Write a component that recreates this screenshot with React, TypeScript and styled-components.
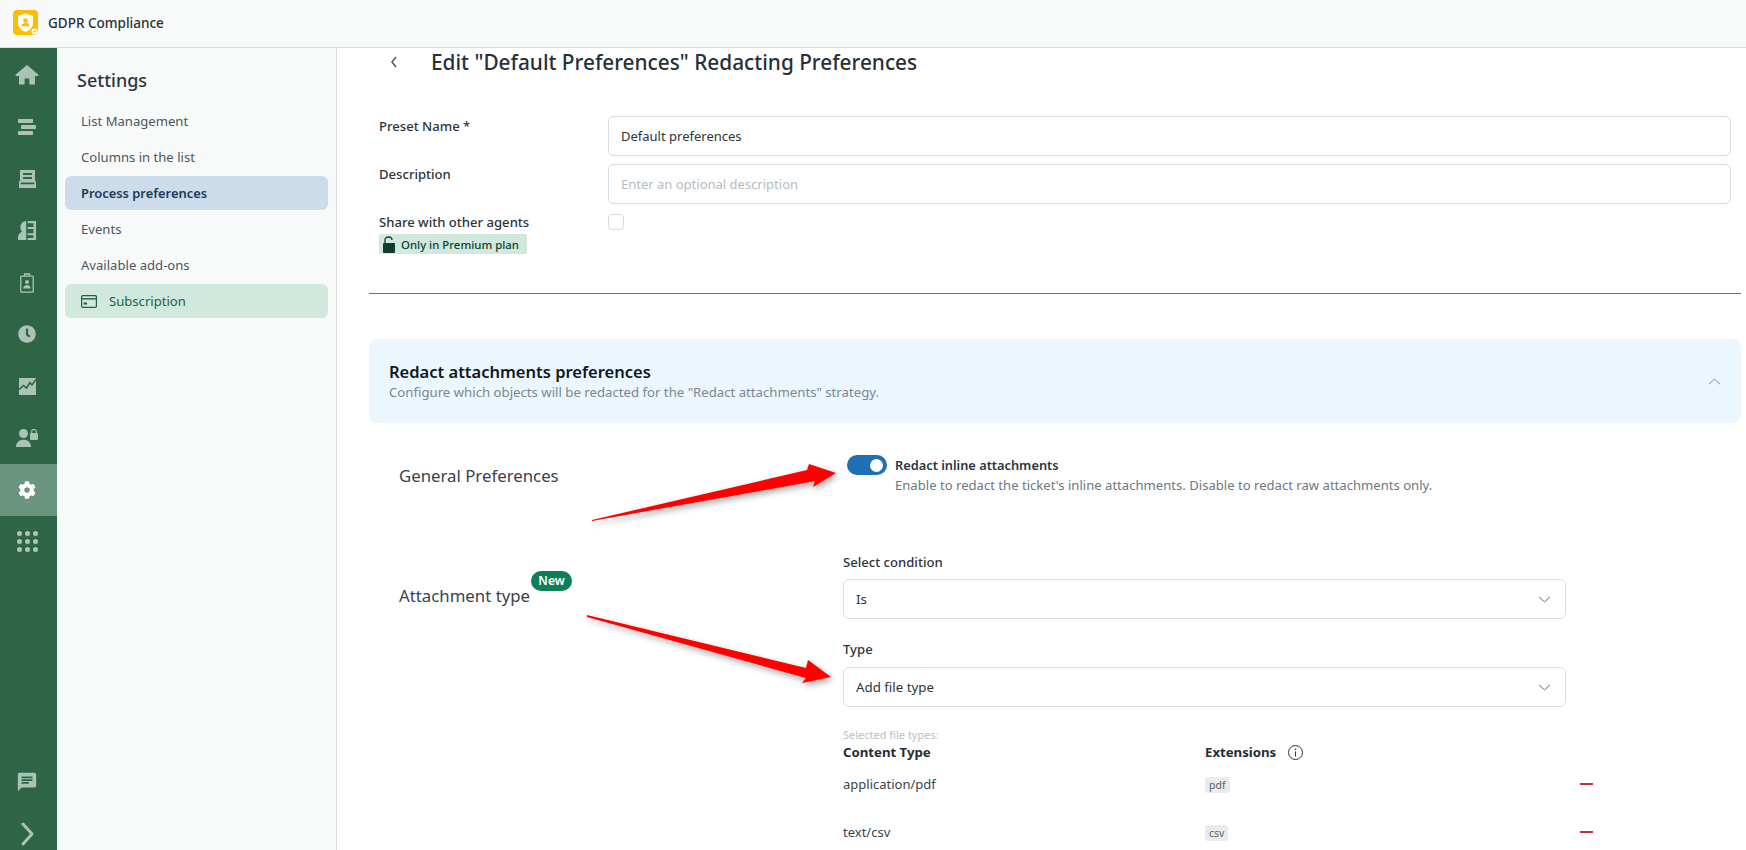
import React from "react";
import styled, { createGlobalStyle } from "styled-components";
import { FaCog, FaClock } from "react-icons/fa";
import { MdChat } from "react-icons/md";

const Global = createGlobalStyle`
  html, body { margin: 0; padding: 0; background: #fff; }
  body { font-family: "Noto Sans", "Open Sans", sans-serif; color: #2c343c; }
  * { box-sizing: border-box; }
`;

const Page = styled.div`
  position: relative;
  width: 100%;
  height: 850px;
  overflow: hidden;
  display: flex;
  flex-direction: column;
`;

const TopBar = styled.header`
  height: 48px;
  flex: none;
  display: flex;
  align-items: center;
  gap: 10px;
  padding: 0 0 2px 13px;
  background: #f8faf9;
  border-bottom: 1px solid #dcdfe1;
`;
const AppTitle = styled.div`
  font-size: 13.5px;
  font-weight: 500;
  color: #263238;
`;
const Body = styled.div`
  flex: 1;
  min-height: 0;
  display: flex;
`;
const Rail = styled.nav`
  width: 57px;
  flex: none;
  background: #2e6546;
  display: flex;
  flex-direction: column;
  padding-top: 1.5px;
`;
const RailItem = styled.div<{ $active?: boolean }>`
  height: 51.8px;
  flex: none;
  display: flex;
  align-items: center;
  justify-content: center;
  padding-right: 3px;
  color: ${(p) => (p.$active ? "#ffffff" : "#abc3b7")};
  background: ${(p) => (p.$active ? "#6b957f" : "transparent")};
`;
const RailBottom = styled.div`
  margin-top: auto;
  margin-bottom: -10px;
  display: flex;
  flex-direction: column;
`;
const SubNav = styled.aside`
  width: 280px;
  flex: none;
  background: #f8faf9;
  border-right: 1px solid #dcdfe1;
  padding: 20px 8px 0 8px;
`;
const SubTitle = styled.h2`
  margin: 0 0 11px 12px;
  font-size: 18px;
  line-height: 25px;
  font-weight: 500;
  color: #2c343f;
`;
const SubItem = styled.div<{ $kind?: "active" | "green" }>`
  height: 34px;
  margin-bottom: 2px;
  border-radius: 6px;
  display: flex;
  align-items: center;
  gap: 12px;
  padding-left: 16px;
  font-size: ${(p) => (p.$kind === "active" ? "12.9px" : "13.1px")};
  font-weight: ${(p) => (p.$kind === "active" ? 600 : 400)};
  color: ${(p) => (p.$kind === "active" ? "#1d3a57" : p.$kind === "green" ? "#1f5f49" : "#4c5660")};
  background: ${(p) => (p.$kind === "active" ? "#ccdceb" : p.$kind === "green" ? "#d1e8dd" : "transparent")};
`;
const Main = styled.main`
  flex: 1;
  min-width: 0;
  padding: 0 5px 0 32px;
  background: #fff;
`;
const Header = styled.div`
  height: 28px;
  display: flex;
  align-items: center;
  padding-left: 20px;
  margin-bottom: 40px;
`;
const BackIcon = styled.svg`
  width: 10px;
  height: 14px;
  margin-right: 32px;
  flex: none;
`;
const PageTitle = styled.h1`
  margin: 0;
  font-size: 20.8px;
  line-height: 28px;
  font-weight: 500;
  color: #27303a;
`;
const FormRow = styled.div<{ $gap: number }>`
  display: grid;
  grid-template-columns: 229px 1fr;
  padding: 0 10px;
  margin-bottom: ${(p) => p.$gap}px;
`;
const FieldLabel = styled.div`
  font-size: 13.1px;
  line-height: 20px;
  font-weight: 500;
  color: #2c343c;
`;
const ShareCell = styled.div`
  margin-top: -2px;
`;
const TextInput = styled.input`
  display: block;
  width: 100%;
  height: 40px;
  padding: 0 12px;
  border: 1px solid #dadde0;
  border-radius: 6px;
  font: 400 13px "Noto Sans", sans-serif;
  color: #2c343c;
  outline: none;
  &::placeholder { color: #b4bbc2; opacity: 1; }
`;
const Check = styled.div`
  width: 16px;
  height: 16px;
  border: 1px solid #d5d9dc;
  border-radius: 4px;
  background: #fff;
`;
const Premium = styled.div`
  display: flex;
  align-items: center;
  gap: 5px;
  width: 148px;
  height: 20px;
  margin-top: 2px;
  padding-left: 3px;
  border-radius: 2px;
  background: #d1e8dd;
  font-size: 11.4px;
  font-weight: 500;
  color: #0f3e2e;
`;
const Divider = styled.hr`
  margin: 39px 0 45px;
  border: 0;
  border-top: 1px solid #5f7488;
`;
const Panel = styled.section`
  height: 84px;
  border-radius: 8px;
  background: #ebf6ff;
  display: flex;
  align-items: center;
  justify-content: space-between;
  padding: 0 20px 0 20px;
`;
const PanelTitle = styled.div`
  font-size: 16.5px;
  line-height: 22px;
  font-weight: 600;
  color: #10171d;
`;
const PanelSub = styled.div`
  font-size: 13.2px;
  line-height: 18px;
  color: #7d8791;
`;
const PrefGrid = styled.div`
  display: grid;
  grid-template-columns: 444px 1fr;
  padding-left: 30px;
`;
const SectionHead = styled.div<{ $top: number }>`
  position: relative;
  width: max-content;
  height: 24px;
  margin-top: ${(p) => p.$top}px;
  font-size: 16.8px;
  line-height: 24px;
  color: #3a434c;
`;
const NewBadge = styled.span`
  position: absolute;
  left: 132px;
  top: -13px;
  width: 41px;
  height: 20px;
  border-radius: 10px;
  background: #0e7f5a;
  color: #fff;
  font-size: 12px;
  font-weight: 600;
  line-height: 20px;
  text-align: center;
`;
const ToggleRow = styled.div`
  display: flex;
  gap: 8px;
  padding: 0 0 0 4px;
  margin-top: 32px;
`;
const Toggle = styled.div`
  width: 40px;
  height: 20px;
  flex: none;
  border-radius: 10px;
  background: #1f6fb5;
  display: flex;
  align-items: center;
  justify-content: flex-end;
  padding-right: 4px;
  &::after {
    content: "";
    width: 13px;
    height: 13px;
    border-radius: 50%;
    background: #fff;
  }
`;
const ToggleTitle = styled.div`
  font-size: 12.8px;
  line-height: 20px;
  font-weight: 600;
  color: #2c343c;
`;
const ToggleSub = styled.div`
  font-size: 13.1px;
  line-height: 20px;
  color: #6d7882;
`;
const Fields = styled.div`
  margin-top: 57px;
  width: 723px;
`;
const Select = styled.div<{ $top: number }>`
  height: 40px;
  margin: ${(p) => p.$top}px 0 20px;
  border: 1px solid #dadde0;
  border-radius: 6px;
  display: flex;
  align-items: center;
  justify-content: space-between;
  padding: 0 14px 0 12px;
  font-size: 13.3px;
  color: #2c343c;
`;
const Hint = styled.div`
  margin-top: 21px;
  font-size: 11px;
  line-height: 14px;
  color: #b9bfc5;
`;
const TableRow = styled.div<{ $head?: boolean }>`
  display: grid;
  grid-template-columns: 362px 375px 20px;
  width: 780px;
  height: ${(p) => (p.$head ? "33px" : "48px")};
  padding-top: ${(p) => (p.$head ? "1px" : "0")};
  align-items: start;
  font-size: ${(p) => (p.$head ? "13.2px" : "13px")};
  line-height: 18px;
  font-weight: ${(p) => (p.$head ? 700 : 400)};
  color: ${(p) => (p.$head ? "#252c33" : "#3a434c")};
`;
const Extension = styled.div`
  display: flex;
  align-items: center;
  gap: 12px;
`;
const Tag = styled.span`
  display: inline-block;
  height: 16px;
  margin-top: 1px;
  padding: 0 4px;
  border-radius: 3px;
  background: #e9ebee;
  font-size: 10.5px;
  line-height: 16px;
  color: #5a636c;
`;
const Minus = styled.span`
  display: block;
  width: 13px;
  height: 2px;
  margin-top: 8px;
  background: #c9303e;
`;
const ArrowLayer = styled.svg`
  position: absolute;
  left: 0;
  top: 0;
  width: 1746px;
  height: 850px;
  pointer-events: none;
  filter: drop-shadow(2px 3px 3px rgba(0, 0, 0, 0.35));
`;

const Chevron = ({ up }: { up?: boolean }) => (
  <svg width="13" height="7" viewBox="0 0 13 7" fill="none" stroke={up ? "#7d8791" : "#5f6972"} strokeWidth="1">
    <path d={up ? "M1 6.2 6.5 1 12 6.2" : "M1 .8 6.5 6 12 .8"} />
  </svg>
);

const Logo = () => (
  <svg width="25" height="25" viewBox="0 0 25 25">
    <rect width="25" height="25" rx="4" fill="#fbbf00" />
    <path d="M12.5 3.5 20 6v7c0 4.5-3.2 7.2-7.5 9C8.2 20.2 5 17.5 5 13V6z" fill="#fff" />
    <circle cx="12.5" cy="10.5" r="2.3" fill="#fbbf00" />
    <path d="M8.3 16.3c0-2.2 1.9-3.3 4.2-3.3s4.2 1.1 4.2 3.3z" fill="#fbbf00" />
    <circle cx="21.5" cy="21.5" r="3" fill="#fff" />
    <circle cx="21.5" cy="21.5" r="1.1" fill="#fbbf00" />
  </svg>
);

const HomeIcon = () => (
  <svg width="24" height="22" viewBox="0 0 24 22" fill="currentColor">
    <path d="M12 1 .8 10.6c-.7.6-.3 1.4.5 1.4H4v8.6h5.6v-6h4.8v6H20V12h2.7c.8 0 1.2-.8.5-1.4z" />
  </svg>
);
const ListIcon = () => (
  <svg width="18" height="16" viewBox="0 0 18 16" fill="currentColor">
    <rect x="0" y="0" width="15" height="4" rx=".8" />
    <rect x="3" y="6" width="15" height="4" rx=".8" />
    <rect x="0" y="12" width="15" height="4" rx=".8" />
  </svg>
);
const InboxIcon = () => (
  <svg width="17" height="18" viewBox="0 0 17 18" fill="currentColor">
    <path d="M1 0h15v12.5H1zM4 3v2h9V3zM4 7v2h9V7z" fillRule="evenodd" />
    <path d="M0 11h1.6v3.2h13.8V11H17v7H0z" />
  </svg>
);
const BookUserIcon = () => (
  <svg width="18" height="19" viewBox="0 0 18 19" fill="currentColor">
    <path d="M8.2 0v19H0v-2.5c0-3 2.2-5 4.2-6C3 9.4 2.4 8 2.4 6.2 2.4 2.6 4.8 .3 8.2 0z" />
    <path d="M9.6 0H18v19H9.6v-2h5.9v-2.8H9.6v-2h5.9V8H9.6V6h5.9V2.3H9.6z" />
  </svg>
);
const ClipIcon = () => (
  <svg width="14" height="20" viewBox="0 0 14 20" fill="none" stroke="currentColor" strokeWidth="1.3">
    <rect x=".8" y="3.2" width="12.4" height="16" rx=".8" />
    <path d="M4.5 3V1h5v2" />
    <circle cx="7" cy="9" r="2" fill="currentColor" stroke="none" />
    <path d="M3.3 15.5c0-2.3 1.6-3.5 3.7-3.5s3.7 1.2 3.7 3.5z" fill="currentColor" stroke="none" />
  </svg>
);
const ChartIcon = () => (
  <svg width="17" height="17" viewBox="0 0 17 17">
    <path d="M0 0h17v17H0z" fill="currentColor" />
    <path d="M0 11.5 4.5 7.5 7.5 10 11 4.5 13 7 17 1.5" fill="none" stroke="#2e6546" strokeWidth="1.6" />
  </svg>
);
const UserLockIcon = () => (
  <svg width="22" height="18" viewBox="0 0 22 18" fill="currentColor">
    <circle cx="7.5" cy="4.5" r="4.5" />
    <path d="M0 18c0-4.5 3-7.2 7.5-7.2S15 13.500 15 18z" />
    <rect x="14" y="4" width="8" height="7" rx="1" />
    <path d="M15.700 4.500V2.700C15.700 1.200 16.700 .5 18 .5s2.300.7 2.300 2.200v1.800" fill="none" stroke="currentColor" strokeWidth="1.200" />
  </svg>
);
const DotsIcon = () => (
  <svg width="21" height="21" viewBox="0 0 21 21" fill="currentColor">
    {[2.5, 10.5, 18.5].flatMap((cy) =>
      [2.5, 10.5, 18.5].map((cx) => <circle key={`${cx}-${cy}`} cx={cx} cy={cy} r="2.5" />)
    )}
  </svg>
);
const NextIcon = () => (
  <svg width="13" height="24" viewBox="0 0 13 24" fill="none" stroke="currentColor" strokeWidth="3" strokeLinecap="round" strokeLinejoin="round">
    <path d="M2 2 11 12 2 22" />
  </svg>
);
const CardIcon = () => (
  <svg width="16" height="13" viewBox="0 0 16 13" fill="none" stroke="#1f5f49" strokeWidth="1.200">
    <rect x=".6" y=".6" width="14.800" height="11.800" rx="1.200" />
    <path d="M.6 3.800h14.800" strokeWidth="1.400" />
    <rect x="2.500" y="7.500" width="3.500" height="2" fill="#1f5f49" stroke="none" />
  </svg>
);
const LockIcon = () => (
  <svg width="14" height="17" viewBox="0 0 14 17">
    <path d="M3 7V4c0-2 1.500-3 3.500-3S10 2 10 4" fill="none" stroke="#0f3e2e" strokeWidth="1.300" />
    <rect x="1" y="7" width="12" height="10" rx="1" fill="#0f3e2e" />
  </svg>
);
const InfoIcon = () => (
  <svg width="15" height="15" viewBox="0 0 15 15" fill="none" stroke="#2c343c" strokeWidth="1">
    <circle cx="7.500" cy="7.500" r="7" />
    <path d="M7.500 6.500v5" />
    <circle cx="7.500" cy="4.200" r=".8" fill="#2c343c" stroke="none" />
  </svg>
);

const railTop: React.ReactNode[] = [
  <HomeIcon />,
  <ListIcon />,
  <InboxIcon />,
  <BookUserIcon />,
  <ClipIcon />,
  <FaClock size={18} />,
  <ChartIcon />,
  <UserLockIcon />,
  <FaCog size={18} />,
  <DotsIcon />,
];

const subItems = ["List Management", "Columns in the list"];

export default function App() {
  return (
    <Page>
      <Global />
      <TopBar>
        <Logo />
        <AppTitle>GDPR Compliance</AppTitle>
      </TopBar>
      <Body>
        <Rail>
          {railTop.map((icon, i) => (
            <RailItem key={i} $active={i === 8}>
              {icon}
            </RailItem>
          ))}
          <RailBottom>
            <RailItem><MdChat size={22} /></RailItem>
            <RailItem><NextIcon /></RailItem>
          </RailBottom>
        </Rail>
        <SubNav>
          <SubTitle>Settings</SubTitle>
          {subItems.map((s) => (
            <SubItem key={s}>{s}</SubItem>
          ))}
          <SubItem $kind="active">Process preferences</SubItem>
          <SubItem>Events</SubItem>
          <SubItem>Available add-ons</SubItem>
          <SubItem $kind="green">
            <CardIcon />
            Subscription
          </SubItem>
        </SubNav>
        <Main>
          <Header>
            <BackIcon viewBox="0 0 10 14" fill="none" stroke="#4c5660" strokeWidth="1.500">
              <path d="M7 2 3 7l4 5" />
            </BackIcon>
            <PageTitle>Edit "Default Preferences" Redacting Preferences</PageTitle>
          </Header>
          <FormRow $gap={8}>
            <FieldLabel>Preset Name *</FieldLabel>
            <TextInput readOnly value="Default preferences" />
          </FormRow>
          <FormRow $gap={10}>
            <FieldLabel>Description</FieldLabel>
            <TextInput readOnly placeholder="Enter an optional description" />
          </FormRow>
          <FormRow $gap={0}>
            <ShareCell>
              <FieldLabel>Share with other agents</FieldLabel>
              <Premium>
                <LockIcon />
                Only in Premium plan
              </Premium>
            </ShareCell>
            <Check />
          </FormRow>
          <Divider />
          <Panel>
            <div>
              <PanelTitle>Redact attachments preferences</PanelTitle>
              <PanelSub>Configure which objects will be redacted for the "Redact attachments" strategy.</PanelSub>
            </div>
            <Chevron up />
          </Panel>
          <PrefGrid>
            <SectionHead $top={41}>General Preferences</SectionHead>
            <ToggleRow>
              <Toggle />
              <div>
                <ToggleTitle>Redact inline attachments</ToggleTitle>
                <ToggleSub>Enable to redact the ticket's inline attachments. Disable to redact raw attachments only.</ToggleSub>
              </div>
            </ToggleRow>
            <SectionHead $top={89}>
              Attachment type
              <NewBadge>New</NewBadge>
            </SectionHead>
            <Fields>
              <FieldLabel>Select condition</FieldLabel>
              <Select $top={7}>Is<Chevron /></Select>
              <FieldLabel>Type</FieldLabel>
              <Select $top={8}>Add file type<Chevron /></Select>
              <Hint>Selected file types:</Hint>
              <TableRow $head>
                <span>Content Type</span>
                <Extension>Extensions <InfoIcon /></Extension>
              </TableRow>
              <TableRow>
                <span>application/pdf</span>
                <div><Tag>pdf</Tag></div>
                <Minus />
              </TableRow>
              <TableRow>
                <span>text/csv</span>
                <div><Tag>csv</Tag></div>
                <Minus />
              </TableRow>
            </Fields>
          </PrefGrid>
        </Main>
      </Body>
      <ArrowLayer viewBox="0 0 1746 850">
        <polygon points="592,520 807,470 809,464 836,473 813,487 815,481 592,521" fill="#ff0000" />
        <polygon points="587,615 806,668 808,660 831,677 802,683 806,678 587,617" fill="#ff0000" />
      </ArrowLayer>
    </Page>
  );
}
